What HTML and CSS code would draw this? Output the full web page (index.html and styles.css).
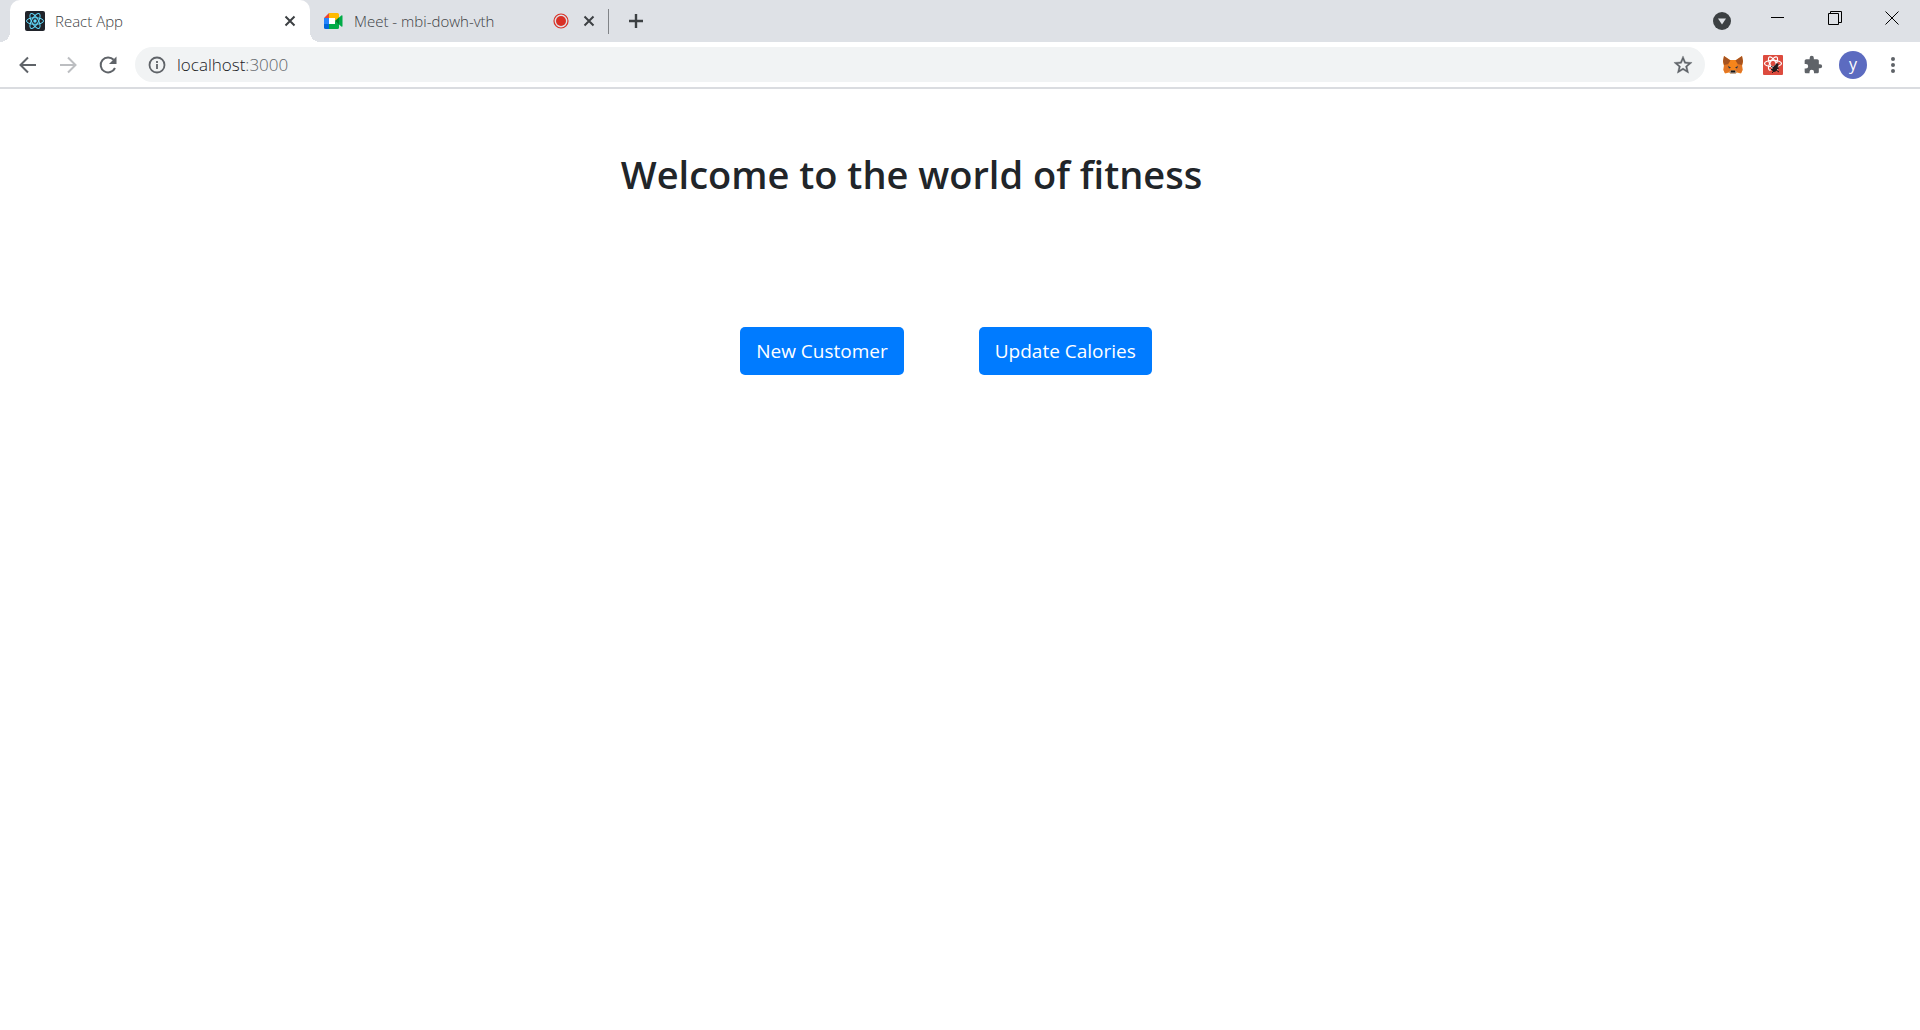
FILE: index.html
```html
<!DOCTYPE html>
<html lang="en">
<head>
<meta charset="utf-8">
<title>React App</title>
<link rel="stylesheet" href="styles.css">
</head>
<body>
<header class="browser">
  <div class="tab-strip">
    <div class="tab tab-active">
      <svg class="favicon" viewBox="0 0 20 20" aria-hidden="true">
        <rect width="20" height="20" rx="2" fill="#20232a"/>
        <g fill="none" stroke="#61dafb" stroke-width="1"><ellipse cx="10" cy="10" rx="8.5" ry="3.3"/><ellipse cx="10" cy="10" rx="8.5" ry="3.3" transform="rotate(60 10 10)"/><ellipse cx="10" cy="10" rx="8.5" ry="3.3" transform="rotate(120 10 10)"/></g>
        <circle cx="10" cy="10" r="1.7" fill="#61dafb"/>
      </svg>
      <span class="tab-title">React App</span>
      <button class="tab-close" aria-label="Close tab"><svg width="20" height="20" viewBox="0 0 20 20"><path d="M5.5 5.5l9 9M14.5 5.5l-9 9" stroke="#3c4043" stroke-width="2"/></svg></button>
    </div>
    <div class="tab">
      <svg class="favicon" viewBox="0 0 20 20" aria-hidden="true">
        <path d="M4 6h9v8H4z" fill="#fff"/>
        <path d="M0 7l5-5v5z" fill="#ea4335"/>
        <path d="M0 7h5v6H0z" fill="#2684fc"/>
        <path d="M0 13h5v5H1.500Q0 18 0 16.500z" fill="#0066da"/>
        <path d="M5 2h8.500Q15 2 15 3.500V7l-4 3V7H5z" fill="#ffba00"/>
        <path d="M5 13h6v-3l4 3v3.500Q15 18 13.500 18H5z" fill="#00ac47"/>
        <path d="M11 10l6.300-5.500Q18.500 4 18.500 5v10Q18.500 16 17.300 15.500z" fill="#00ac47"/>
        <path d="M11 10l4-3.500v7z" fill="#00832d"/>
      </svg>
      <span class="tab-title">Meet - mbi-dowh-vth</span>
      <svg class="recording" width="16" height="16" viewBox="0 0 16 16" aria-hidden="true"><circle cx="8" cy="8" r="7" fill="none" stroke="#d93025" stroke-width="1.200"/><circle cx="8" cy="8" r="5" fill="#d93025"/></svg>
      <button class="tab-close" aria-label="Close tab"><svg width="20" height="20" viewBox="0 0 20 20"><path d="M5.500 5.500l9 9M14.500 5.500l-9 9" stroke="#3c4043" stroke-width="2"/></svg></button>
    </div>
    <span class="tab-divider"></span>
    <button class="new-tab" aria-label="New tab"><svg width="20" height="20" viewBox="0 0 20 20"><path d="M10 3v14M3 10h14" stroke="#3c4043" stroke-width="2.400"/></svg></button>
    <button class="tab-search" aria-label="Search tabs"><svg width="18" height="18" viewBox="0 0 18 18"><circle cx="9" cy="9" r="9" fill="#3c4043"/><path d="M5 6.500h8L9 12.500z" fill="#dee1e6"/></svg></button>
    <div class="window-controls">
      <button aria-label="Minimize"><svg width="14" height="14" viewBox="0 0 14 14"><path d="M0 6.500h13" stroke="#000"/></svg></button>
      <button aria-label="Restore"><svg width="14" height="14" viewBox="0 0 14 14"><path d="M.5 2.500h10v11H.5zM2.500 2.500v-2h11v11h-3" fill="none" stroke="#000"/></svg></button>
      <button aria-label="Close"><svg width="14" height="14" viewBox="0 0 14 14"><path d="M.5.5l13 13M13.500.5l-13 13" stroke="#000"/></svg></button>
    </div>
  </div>
  <div class="toolbar">
    <div class="nav">
      <button aria-label="Back"><svg width="20" height="20" viewBox="0 0 20 20"><path d="M18 10H3M10 2.500L2.500 10l7.500 7.500" fill="none" stroke="#5f6368" stroke-width="2"/></svg></button>
      <button aria-label="Forward"><svg width="20" height="20" viewBox="0 0 20 20"><path d="M2 10h15M10 2.500l7.500 7.500-7.500 7.500" fill="none" stroke="#bcbec1" stroke-width="2"/></svg></button>
      <button aria-label="Reload"><svg width="20" height="20" viewBox="0 0 20 20"><path d="M17 13a7.500 7.500 0 1 1-1.300-8.200" fill="none" stroke="#5f6368" stroke-width="2"/><path d="M18.500 1.500v7.500H11z" fill="#5f6368"/></svg></button>
    </div>
    <div class="address">
      <svg width="18" height="18" viewBox="0 0 18 18" aria-hidden="true"><circle cx="9" cy="9" r="7.500" fill="none" stroke="#5f6368" stroke-width="1.800"/><path d="M9 8v5M9 5v2" stroke="#5f6368" stroke-width="1.800"/></svg>
      <a class="url" href="#">localhost<span class="port">:3000</span></a>
      <button aria-label="Bookmark this tab"><svg width="20" height="20" viewBox="1 1 22 22"><path d="M22 9.240l-7.190-.62L12 2 9.190 8.630 2 9.240l5.460 4.730L5.820 21 12 17.270 18.180 21l-1.630-7.030L22 9.240zM12 15.400l-3.760 2.270 1-4.280-3.320-2.880 4.380-.38L12 6.100l1.710 4.040 4.380.38-3.320 2.880 1 4.280L12 15.400z" fill="#5f6368" stroke="#5f6368" stroke-width=".4"/></svg></button>
    </div>
    <div class="extensions">
      <button aria-label="MetaMask"><svg width="20" height="20" viewBox="0 0 20 20">
        <path d="M1 1l6 4h6l6-4 1 6-1 4 .5 4-1.500 3.500-4-1L12 19H8l-2-1.500-4 1L.5 15l.5-4-1-4z" fill="#f6851b"/>
        <path d="M1 1l6.500 4.500L5 9.500 1 10 0 6zM19 1l-6.500 4.500L15 9.500l4 .5 1-4z" fill="#a65320"/>
        <path d="M1 10l5-.5L8 16l-6 2-1.500-3zM19 10l-5-.5-2 6.500 6 2 1.500-3z" fill="#e27625"/>
        <path d="M5 11l3 1.500-2 1zM15 11l-3 1.500 2 1z" fill="#233447"/>
        <path d="M6 17l2-1.500h4l2 1.500-2 2H8z" fill="#c0ad9e"/><path d="M8 15.500h4l.5 2h-5z" fill="#161616"/>
      </svg></button>
      <button aria-label="React Developer Tools"><svg width="20" height="20" viewBox="0 0 20 20">
        <rect width="20" height="20" rx="1" fill="#dd4b3e"/>
        <g fill="none" stroke="#fff" stroke-width="1.200"><ellipse cx="10" cy="8.500" rx="8.500" ry="3.200"/><ellipse cx="10" cy="8.500" rx="7.500" ry="3" transform="rotate(60 10 8.500)"/><ellipse cx="10" cy="8.500" rx="7.500" ry="3" transform="rotate(120 10 8.500)"/></g>
        <ellipse cx="12" cy="13.500" rx="2.400" ry="3.800" transform="rotate(30 12 13.500)" fill="#20191a"/><circle cx="14" cy="9.800" r="1.600" fill="#20191a"/>
        <path d="M8 11l3 2M8 14.500h3M9 18l2-2M16 13l-3 1M16 17l-3-2" stroke="#20191a"/>
      </svg></button>
      <button aria-label="Extensions"><svg width="20" height="20" viewBox="0 0 24 24"><path d="M20.500 11H19V7c0-1.100-.9-2-2-2h-4V3.500a2.500 2.500 0 0 0-5 0V5H4c-1.100 0-2 .9-2 2v3.800h1.500a2.700 2.700 0 0 1 0 5.400H2V20c0 1.100.9 2 2 2h3.800v-1.500a2.700 2.700 0 0 1 5.400 0V22H17c1.100 0 2-.9 2-2v-4h1.500a2.500 2.500 0 0 0 0-5z" fill="#5f6368"/></svg></button>
      <button aria-label="Profile"><span class="avatar">y</span></button>
      <button aria-label="Menu"><svg width="20" height="20" viewBox="0 0 20 20" fill="#5f6368"><circle cx="10" cy="4" r="2"/><circle cx="10" cy="10" r="2"/><circle cx="10" cy="16" r="2"/></svg></button>
    </div>
  </div>
</header>
<main class="page">
  <h2 class="welcome">Welcome to the world of fitness</h2>
  <div class="actions">
    <button class="btn">New Customer</button>
    <button class="btn">Update Calories</button>
  </div>
</main>
</body>
</html>
```
FILE: styles.css
```css
* { box-sizing: border-box; }

body {
  margin: 0;
  background: #fff;
  color: #212529;
  font-family: "Open Sans", "Noto Sans", sans-serif;
}

button {
  padding: 0;
  border: 0;
  background: none;
  font: inherit;
  color: inherit;
}

svg { display: block; flex: none; }

.browser { border-bottom: 2px solid #dadce0; }

.tab-strip {
  display: flex;
  align-items: center;
  height: 42px;
  padding-left: 10px;
  background: #dee1e6;
}

.tab {
  position: relative;
  display: flex;
  align-items: center;
  width: 298px;
  height: 42px;
  padding: 0 9px 0 14px;
  color: #3c4043;
  font-size: 15px;
  font-weight: 300;
}

.tab-active {
  width: 300px;
  padding: 0 10px 0 15px;
  background: #fff;
  border-radius: 10px 10px 0 0;
}

.tab-active::before,
.tab-active::after {
  content: "";
  position: absolute;
  bottom: 0;
  width: 10px;
  height: 10px;
}

.tab-active::before {
  left: -10px;
  background: radial-gradient(circle at 0 0, transparent 10px, #fff 10px);
}

.tab-active::after {
  right: -10px;
  background: radial-gradient(circle at 100% 0, transparent 10px, #fff 10px);
}

.favicon { width: 20px; height: 20px; margin-right: 10px; }
.tab-title { flex: 1; white-space: nowrap; line-height: 20px; padding-bottom: 1px; }
.recording { margin-right: 10px; }
.tab-divider { width: 1px; height: 25px; background: #808387; }
.new-tab { margin-left: 17px; }
.tab-search { margin: 0 18px 0 auto; }

.window-controls { display: flex; align-self: flex-start; }

.window-controls button {
  display: flex;
  align-items: center;
  justify-content: center;
  width: 57px;
  height: 36px;
}

.toolbar {
  display: flex;
  align-items: center;
  height: 45px;
  padding: 0 7px 0 8px;
}

.nav, .extensions { display: flex; }

.nav button, .extensions button {
  display: flex;
  align-items: center;
  justify-content: center;
  width: 40px;
  height: 35px;
}

.address {
  display: flex;
  flex: 1;
  align-items: center;
  height: 35px;
  margin: 0 8px 0 7px;
  padding: 0 12px 0 13px;
  border-radius: 18px;
  background: #f1f3f4;
}

.url {
  flex: 1;
  margin-left: 11px;
  color: #202124;
  font-size: 17px;
  font-weight: 300;
  text-decoration: none;
}

.port { color: #5f6368; }

.avatar {
  width: 28px;
  height: 28px;
  border-radius: 50%;
  background: #5c6bc0;
  color: #fff;
  font-size: 16px;
  line-height: 26px;
}

.page { padding: 61px 97px 0 0; }

.welcome {
  margin: 0;
  font-size: 38px;
  font-weight: 600;
  line-height: 48px;
  text-align: center;
}

.actions {
  display: flex;
  justify-content: center;
  gap: 75px;
  margin: 129px 0 0 69px;
}

.btn {
  height: 48px;
  padding: 0 16px;
  border-radius: 5px;
  background: #007bff;
  color: #fff;
  font-size: 19px;
}
```
